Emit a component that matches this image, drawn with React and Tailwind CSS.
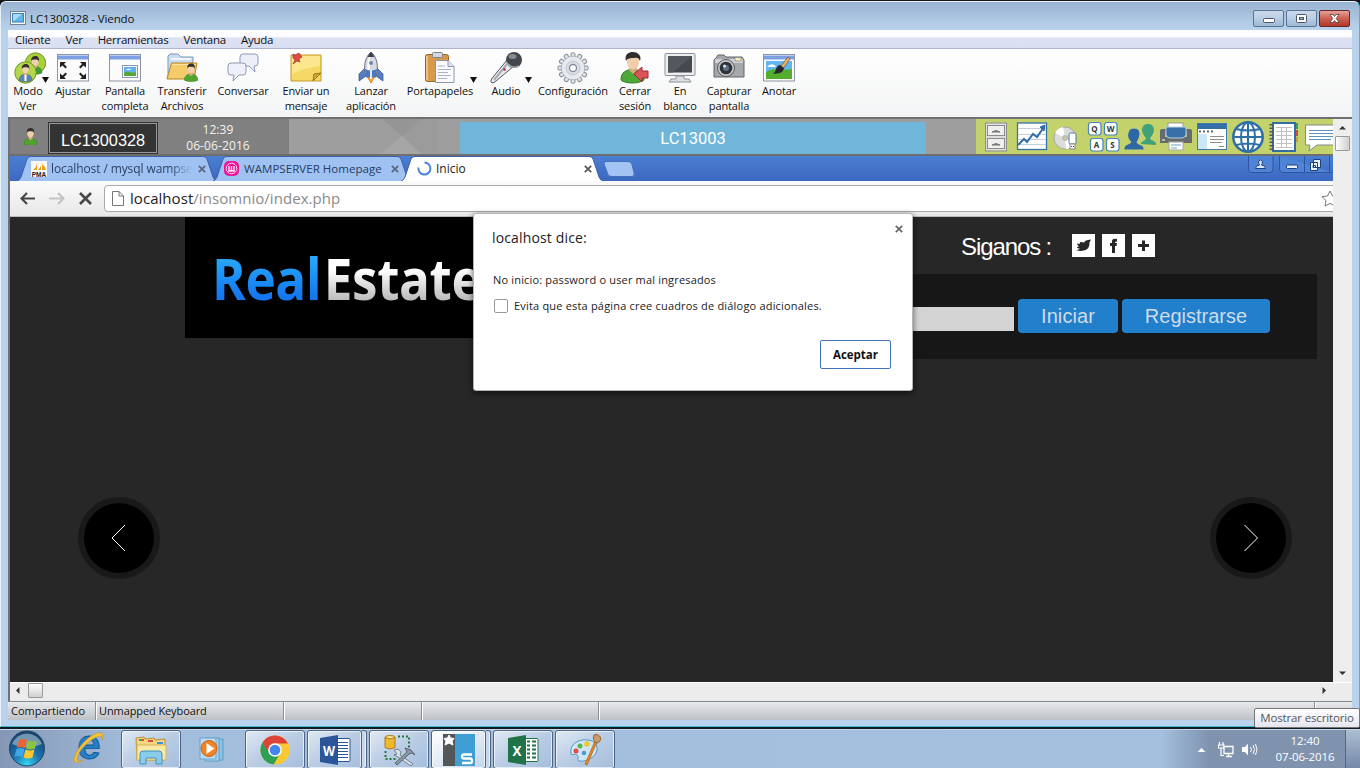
import React from "react";

const ui = "font-['Open_Sans','Noto_Sans',sans-serif]";

/* ---------- viewer toolbar icons ---------- */

function Person({ x = 0, y = 0, s = 1, body = "#4fa52f" }) {
  return (
    <g transform={`translate(${x} ${y}) scale(${s})`}>
      <path d="M1 20c0-5 3-7 8-8 5 1 8 3 8 8-3 2-13 2-16 0z" fill={body} stroke="#3c7a24" strokeWidth=".6" />
      <path d="M6.500 9h5v4l-2.500 2-2.500-2z" fill="#d9ab82" />
      <ellipse cx="9" cy="6.500" rx="4" ry="5" fill="#f0cfae" />
      <path d="M4.500 6C4 1 7 0 9.500 0 12 0 14 2 13.500 6.500 13 4 11 4 9 4 6.500 4 5.500 4 4.500 6z" fill="#33302d" />
    </g>
  );
}

const WinFrame = () => (
  <>
    <rect x=".5" y="2.500" width="31" height="26.500" fill="#fbfbfc" stroke="#8d94a6" />
    <rect x="1" y="3" width="30" height="4.500" fill="#7d9fe4" />
    <path d="M1 3.500h30" stroke="#b9cdf6" />
  </>
);

const toolIcons = {
  modo: (
    <>
      <circle cx="21.500" cy="11" r="10.200" fill="#a9cf3c" stroke="#73962a" />
      <Person x={13.5} y={4} s={0.85} body="#3f9a35" />
      <circle cx="11.500" cy="20.500" r="10.700" fill="#b4d748" stroke="#73962a" />
      <Person x={4.2} y={12} s={0.82} body="#5d83b5" />
      <path d="M11.500 23v6" stroke="#fff" strokeWidth="2" />
    </>
  ),
  ajustar: (
    <>
      <WinFrame />
      <path d="M3 10h6l-2 2 3 3-1.500 1.500-3-3L3 15.500zM29 10h-6l2 2-3 3 1.500 1.500 3-3 2.500 2zM3 27h6l-2-2 3-3-1.500-1.500-3 3L3 21.500zM29 27h-6l2-2-3-3 1.500-1.500 3 3 2.500-2z" fill="#222" />
    </>
  ),
  pantalla: (
    <>
      <WinFrame />
      <rect x="13.500" y="13.500" width="15" height="12" fill="#fff" stroke="#8b98ad" />
      <rect x="15" y="15" width="12" height="9" fill="#60b1ee" />
      <path d="M15 21c4-3 8 1 12-1v4H15z" fill="#57a733" />
      <path d="M17 18c2-2 4-1 5 0z" fill="#fff" />
    </>
  ),
  transferir: (
    <>
      <path d="M2 25V4l2-2h8l3 3h12v6L6 12z" fill="#c9dcf2" stroke="#7d97ba" />
      <path d="M5 7h20" stroke="#fff" strokeWidth="1.500" />
      <path d="M1 27L5.500 11H31l-3 16z" fill="#f5cc69" stroke="#b88425" />
      <path d="M6.500 12.500H29" stroke="#fce7a8" />
      <Person x={17.500} y={11.500} s={0.84} />
    </>
  ),
  conversar: (
    <>
      <path d="M16 2h12q3 0 3 3v6q0 3-3 3h-1l1 6-6-6h-6q-3 0-3-3V5q0-3 3-3z" fill="#eceff7" stroke="#8c98b4" />
      <path d="M4 11h12q3 0 3 3v6q0 3-3 3h-4l-6 6 1-6H4q-3 0-3-3v-6q0-3 3-3z" fill="#eef1f9" stroke="#8c98b4" />
    </>
  ),
  enviar: (
    <>
      <path d="M1 3h30v26H1z" fill="#f6d964" stroke="#c59a2c" />
      <path d="M2 4h28v10Q14 16 2 22z" fill="#fbe88e" />
      <path d="M31 21l-7 1-1 7 8-8z" fill="#d2a437" stroke="#9c7621" />
      <path d="M3 2l2 1 4-2 3 4-3 2 1 3-3-1-4 3 2-4-2-2z" fill="#dd4a45" stroke="#9c2b2b" strokeWidth=".6" />
    </>
  ),
  lanzar: (
    <>
      <path d="M12 24l4 7 4-7z" fill="#f9b22d" stroke="#ef7f1c" />
      <path d="M10 16L4 22v7l7-5zM22 16l6 6v7l-7-5z" fill="#567fc0" stroke="#2b4f8c" strokeWidth=".7" />
      <path d="M11 25C8 14 10 5 16 0c6 5 8 14 5 25z" fill="#d6dae1" stroke="#697080" />
      <path d="M13 23C12 14 12 8 15 4v19z" fill="#fff" />
      <path d="M12.500 5Q14 2 16 0q2 2 3.500 5z" fill="#3b3f47" />
      <path d="M10 17q6 3 12 0l-1 8H11z" fill="#4c77bd" />
      <path d="M16 18v9" stroke="#dfe7f5" strokeWidth="2" />
      <circle cx="16" cy="11" r="2" fill="#6e87ae" />
    </>
  ),
  porta: (
    <>
      <rect x="1.500" y="2.500" width="23" height="27" rx="2" fill="#d79a4c" stroke="#99662a" />
      <path d="M3 4v24" stroke="#eebf80" strokeWidth="2" />
      <rect x="8.500" y=".5" width="10" height="5" rx="1" fill="#d5d9de" stroke="#7d838b" />
      <path d="M11.500 8.500H24l6 6v16H11.500z" fill="#fafbfe" stroke="#8a95ad" />
      <path d="M24 8.500v6h6" fill="#dde3f0" stroke="#8a95ad" />
      <path d="M14 14h7M14 17.500h13M14 20.500h10M14 23.500h13M14 26.500h9" stroke="#aab3ca" />
    </>
  ),
  audio: (
    <>
      <path d="M17 8L1.500 27Q0 30 2 31q2 0 4-2l18-15z" fill="#e9ebee" stroke="#50545b" />
      <path d="M18 11L4 28" stroke="#a7acb4" strokeWidth="2" />
      <circle cx="14.500" cy="17.500" r="1.300" fill="#c9232e" />
      <circle cx="24" cy="8" r="8" fill="#43464a" />
      <path d="M16 10Q22 18 29 14" stroke="#aeb2b7" strokeWidth="1.500" fill="none" />
      <ellipse cx="22.500" cy="4.500" rx="4" ry="2.500" fill="#898d92" />
    </>
  ),
  config: (
    <>
      {[0, 30, 60, 90, 120, 150, 180, 210, 240, 270, 300, 330].map((a) => (
        <rect key={a} x="14" y=".8" width="4" height="6" rx="1.300" fill="#dfe2e8" stroke="#858b96" transform={`rotate(${a} 16 16)`} />
      ))}
      <circle cx="16" cy="16" r="11.700" fill="#e2e5ea" stroke="#a3a9b3" strokeWidth=".7" />
      <circle cx="16" cy="16" r="11" fill="#e7eaef" />
      <circle cx="16" cy="16" r="7" fill="#dadee4" stroke="#c2c6ce" />
      <circle cx="16" cy="16" r="3.500" fill="#fff" stroke="#858b96" strokeWidth="1.300" />
    </>
  ),
  cerrar: (
    <>
      <path d="M2 28c0-8 5-10 12-11 7 1 11 4 11 11-5 4-19 4-23 0z" fill="#4ea838" stroke="#347a25" />
      <path d="M10 14h8v4l-4 4-4-4z" fill="#d9a77f" />
      <ellipse cx="14" cy="10" rx="6" ry="7.500" fill="#f1ceab" />
      <path d="M7 9C5 2 10 0 14 0s9 3 7 9c-1-3-3-4-6-3-4 0-6 0-8 3z" fill="#2f2e2d" />
      <path d="M15 22l8-7v4h6v7h-6v4z" fill="#da5458" stroke="#9c2930" />
    </>
  ),
  blanco: (
    <>
      <rect x="1" y="1.500" width="30" height="22" rx="1" fill="#eceef1" stroke="#8d9299" />
      <rect x="4" y="4" width="24" height="16.500" fill="#45484d" />
      <path d="M4 4h24L9 20.500H4z" fill="#54585e" />
      <path d="M12 24h8v3h5l2 3H5l2-3h5z" fill="#dcdfe3" stroke="#8d9299" />
    </>
  ),
  capturar: (
    <>
      <path d="M3 6l2-3h6l2 2h16l2 3v17H1V8z" fill="#a4a7ab" stroke="#63666a" />
      <path d="M2 7h28v4H2z" fill="#d0d2d4" />
      <rect x="22" y="5.500" width="6" height="3.500" fill="#f0e9b6" stroke="#77797c" strokeWidth=".6" />
      <circle cx="13" cy="16" r="8.500" fill="#c4c6c9" stroke="#595b5f" />
      <circle cx="13" cy="16" r="6.300" fill="#2f3237" />
      <circle cx="13" cy="16" r="3" fill="#5d7188" />
      <circle cx="11.500" cy="14" r="1.500" fill="#dfe6ee" />
    </>
  ),
  anotar: (
    <>
      <WinFrame />
      <rect x="3" y="9" width="26" height="18" fill="#62b6f0" />
      <path d="M3 20c8-5 16-1 26-3v10H3z" fill="#55ad2f" />
      <path d="M4 15c4-4 7-3 9 0z" fill="#fff" />
      <path d="M25 5l-8 10 3 2 7-10z" fill="#e4b270" stroke="#724b23" strokeWidth=".7" />
      <path d="M17 13l4 3c-1 6-6 5-11 6 4-3 2-8 7-9z" fill="#26272b" />
    </>
  ),
};

const tools = [
  ["modo", "Modo", "Ver", "w-10", true],
  ["ajustar", "Ajustar", "", "w-[50px]"],
  ["pantalla", "Pantalla", "completa", "w-[54px]"],
  ["transferir", "Transferir", "Archivos", "w-[60px]"],
  ["conversar", "Conversar", "", "w-[62px]"],
  ["enviar", "Enviar un", "mensaje", "w-16"],
  ["lanzar", "Lanzar", "aplicación", "w-[66px]"],
  ["porta", "Portapapeles", "", "w-[72px]", true],
  ["audio", "Audio", "", "w-[60px]", true],
  ["config", "Configuración", "", "w-[74px]"],
  ["cerrar", "Cerrar", "sesión", "w-[50px]"],
  ["blanco", "En", "blanco", "w-10"],
  ["capturar", "Capturar", "pantalla", "w-[58px]"],
  ["anotar", "Anotar", "", "w-[42px]"],
];

const caretPos = { modo: "left-[34px]", porta: "left-[66px]", audio: "left-[49px]" };

function ViewerToolbar() {
  return (
    <div className="flex h-[69px] items-start border-t border-[#aeb4cc] bg-linear-to-b from-white to-[#f3f4f5] pt-[3px]">
      {tools.map(([id, a, b, w, menu]) => (
        <div key={id} className={`relative flex shrink-0 flex-col items-center ${w}`}>
          <svg className={`h-8 w-8 shrink-0 ${id === "modo" ? "ml-[3px]" : ""}`} viewBox="0 0 32 32">{toolIcons[id]}</svg>
          {menu && (
            <svg className={`absolute top-[25px] h-[6px] w-[7px] ${caretPos[id]}`} viewBox="0 0 7 6"><path d="M0 0h7L3.500 6z" fill="#111" /></svg>
          )}
          <div className="-mt-px text-center text-[11px] leading-[15px] tracking-[-0.12px] whitespace-nowrap text-[#111]">
            <div>{a}</div>
            <div>{b}</div>
          </div>
        </div>
      ))}
    </div>
  );
}

/* ---------- lab bar ---------- */

const labIcons = [
  <>
    <rect x="7.500" y="4" width="21" height="28" fill="#dedede" stroke="#8d8d8d" />
    <rect x="9.500" y="6.500" width="17" height="10" fill="#efefef" stroke="#8b8b8b" />
    <rect x="9.500" y="19.500" width="17" height="10" fill="#efefef" stroke="#8b8b8b" />
    <path d="M14 13q4-3 8 0zM14 26q4-3 8 0z" fill="#777" stroke="#777" />
  </>,
  <>
    <rect x="3.500" y="4" width="29" height="26.500" fill="#fff" stroke="#3872ab" strokeWidth="1.300" />
    <path d="M4 9.500h28M4 15.500h28M4 20.500h28M4 25.500h28" stroke="#c4cede" />
    <path d="M4 26l6-6 3 3 6-8 4 3 7-10" fill="none" stroke="#336da6" strokeWidth="2" />
    <path d="M26 8l5-2-1 6z" fill="#336da6" stroke="#336da6" />
  </>,
  <>
    <circle cx="15" cy="19" r="11" fill="#dcdcdc" stroke="#a6a6a6" />
    <path d="M15 19L5 14a11 11 0 0 1 8-6zM15 19l9 6a11 11 0 0 1-8 5z" fill="#fff" />
    <circle cx="15" cy="19" r="3" fill="#bcbcbc" />
    <circle cx="15" cy="19" r="1.300" fill="#c4d46e" />
    <rect x="19" y="14" width="7" height="11" rx="1.500" fill="#fff" stroke="#4a7dad" />
    <rect x="20" y="25" width="5" height="5" fill="#fff" stroke="#888" />
    <path d="M21 27.500h1M23 27.500h1" stroke="#444" />
  </>,
  <>
    {[[2.500, 3.500, "Q"], [18.500, 3.500, "W"], [4.500, 19.500, "A"], [20.500, 19.500, "S"]].map(([x, y, t]) => (
      <g key={t}>
        <rect x={x} y={y} width="12.500" height="12.500" rx="2.500" fill="#fff" stroke="#4a86b8" strokeWidth="1.200" />
        <text x={x + 6} y={y + 9} fontSize="8" fontWeight="700" textAnchor="middle" fill="#333" fontFamily="Open Sans">{t}</text>
      </g>
    ))}
  </>,
  <>
    <path d="M19 25c0-3 5-3 5-6-3-3-4-6-4-9q1-5 6-5t6 5c0 3-1 6-4 9 0 3 7 2 6 7z" fill="#41a279" />
    <path d="M2 31c-1-6 7-6 7-8-3-3-4-6-3-9q1-5 6-5t6 5c0 3-1 6-3 9 0 3 8 2 7 8z" fill="#2d67a5" stroke="#c4d46e" />
  </>,
  <>
    <rect x="10" y="4" width="15" height="6" fill="#fff" stroke="#999" />
    <path d="M4 10h4l-1 8h22l-1-8h4q2 0 2 2v12H2V12q0-2 2-2z" fill="#666a6c" />
    <path d="M8 8h20v8q-1 3-4 3H12q-3 0-4-3z" fill="#366fa8" stroke="#b9d1e7" />
    <rect x="11" y="23" width="14" height="8" fill="#fff" stroke="#aaa" />
    <path d="M13 26h10M13 29h6" stroke="#72a1c9" />
    <path d="M4 21h3" stroke="#fff" />
  </>,
  <>
    <rect x="3.500" y="4.500" width="29" height="26" fill="#fff" stroke="#4179ad" />
    <rect x="4" y="5" width="28" height="5" fill="#356fa7" />
    <path d="M5 12.500h15" stroke="#666" strokeWidth="2" strokeDasharray="2 2" />
    <rect x="4" y="15" width="9" height="15" fill="#cde6f6" />
    <path d="M16 17.500h14M16 20.500h14M16 23.500h12M25 27.500h5" stroke="#8d8d8d" />
  </>,
  <>
    <circle cx="18" cy="18" r="14.700" fill="#fff" stroke="#2f6fa7" strokeWidth="2.500" />
    <ellipse cx="18" cy="18" rx="7" ry="14.500" fill="none" stroke="#2f6fa7" strokeWidth="2" />
    <path d="M18 3v30M3 18h30M6 10q12 3 24 0M6 26q12-3 24 0" fill="none" stroke="#2f6fa7" strokeWidth="2" />
  </>,
  <>
    <path d="M29 4h3v6h-3z" fill="#3d9b62" /><path d="M29 11h3v6h-3z" fill="#bf5330" /><path d="M29 18h3v5h-3z" fill="#d69a2b" />
    <rect x="7" y="4" width="22" height="28" fill="#fff" stroke="#336da5" strokeWidth="2" />
    <path d="M10 8.500h16M10 12.500h16M10 16.500h16M10 20.500h16M10 24.500h16M10 28.500h16M15.500 8v20M20.500 8v20" stroke="#c1c1c1" />
    <path d="M5.500 5v27" stroke="#555" strokeWidth="4" strokeDasharray="1.500 2" />
  </>,
  <>
    <path d="M3.500 6h34v20H15l-8 6 1-6H3.500z" fill="#fff" stroke="#7f8d86" />
    <path d="M7 11.500h30M7 14.500h30M7 17.500h30M7 20.500h22" stroke="#5b92c1" />
  </>,
];

function LabBar() {
  return (
    <div className="flex h-[37px] overflow-hidden border-b-2 border-[#6e6e6e] bg-[#9e9e9e]">
      <div className="flex w-[279px] shrink-0 bg-[#808080]">
        <div className="flex w-[38px] items-center justify-center">
          <svg className="ml-0.5 h-[17px] w-[15px]" viewBox="0 0 18 21"><Person /></svg>
        </div>
        <div className="mt-[3px] flex w-[110px] items-center justify-center border-2 border-b-0 border-[#333] bg-[#333] pt-[2px] font-['Liberation_Sans',Arial,sans-serif] text-[16.300px] text-white outline-1 -outline-offset-2 outline-[#999]">LC1300328</div>
        <div className="w-[120px] pt-[3px] text-center text-[12px] leading-4 tracking-[0.1px] text-[#f2f2f2]">
          <div>12:39</div>
          <div>06-06-2016</div>
        </div>
      </div>
      <svg className="h-[35px] w-[171px] shrink-0" viewBox="0 0 171 35">
        <path d="M93 0h40l-20 17z" fill="#959595" />
        <path d="M113 17l20-17h16v35h-18z" fill="#9b9b9b" />
        <path d="M113 17L92 35h40z" fill="#a6a6a6" />
      </svg>
      <div className="mt-[3px] flex w-[466px] shrink-0 items-center justify-center bg-[#70b6da] pt-[3px] font-[Roboto,sans-serif] text-[16.500px] text-white">LC13003</div>
      <div className="w-[50px] shrink-0" />
      <div className="flex w-[357px] shrink-0 overflow-hidden bg-[#c3d26b] pl-0.5">
        {labIcons.map((icon, i) => (
          <svg key={i} className="h-9 w-9 shrink-0" viewBox="0 0 36 36">{icon}</svg>
        ))}
      </div>
    </div>
  );
}

/* ---------- inner browser ---------- */

function CloseX({ className = "", color = "#5b6678" }) {
  return (
    <svg className={`h-2 w-2 shrink-0 ${className}`} viewBox="0 0 8 8"><path d="M.8.8l6.400 6.400M7.200.8L.8 7.200" stroke={color} strokeWidth="1.700" /></svg>
  );
}

function Tab({ width, fill, children, className = "" }) {
  return (
    <div className={`relative h-[25px] shrink-0 ${className}`}>
      <svg className="absolute inset-0 h-full w-full" viewBox={`0 0 ${width} 25`} preserveAspectRatio="none">
        <path d={`M0 25Q3 24 4 21L10 3Q11 .5 14 .5H${width - 14}Q${width - 11} .5 ${width - 10} 3L${width - 4} 21Q${width - 3} 24 ${width} 25`} fill={fill} stroke="#3c62a6" strokeWidth="1" />
      </svg>
      <div className="relative flex h-full items-center text-[12px]">{children}</div>
    </div>
  );
}

function Tabs() {
  return (
    <div className="flex h-[25px] overflow-hidden bg-linear-to-b from-[#4b7fd4] to-[#3c68bf] pl-[7px]">
      <Tab width={200} fill="#9fc2f2" className="w-[200px]">
        <svg className="mt-px ml-[14px] h-4 w-4 shrink-0" viewBox="0 0 16 16">
          <rect width="16" height="16" fill="#f7f7f5" />
          <path d="M2 9Q6 6 6 1v8zM7 9q4-3 3-9v9zM11 9V3q3 2 4 6z" fill="#eba11d" />
          <text x="8" y="15.500" fontSize="6.500" fontWeight="700" textAnchor="middle" fill="#222" fontFamily="Liberation Sans">PMA</text>
        </svg>
        <div className="ml-1 w-[141px] bg-linear-to-r from-[#273c5e] from-85% to-[#273c5e00] bg-clip-text tracking-[-0.1px] whitespace-nowrap text-transparent">localhost / mysql wampser</div>
        <CloseX className="ml-1.5" />
      </Tab>
      <Tab width={198} fill="#9fc2f2" className="-ml-1 w-[198px]">
        <svg className="ml-[11px] h-[15px] w-[15px] shrink-0" viewBox="0 0 15 15">
          <rect width="15" height="15" rx="5" fill="#f0149a" />
          <circle cx="7.500" cy="7.500" r="5.300" fill="none" stroke="#ffd9ef" />
          <path d="M5 5v5h5V5M7.500 5v5" fill="none" stroke="#fff" strokeWidth="1.300" />
        </svg>
        <div className="ml-[5px] w-[142px] text-[11.500px] tracking-[0.05px] whitespace-nowrap text-[#273c5e]">WAMPSERVER Homepage</div>
        <CloseX className="ml-[5px]" />
      </Tab>
      <Tab width={202} fill="#ffffff" className="-ml-[10px] w-[202px]">
        <svg className="ml-4 h-[15px] w-[15px] shrink-0" viewBox="0 0 15 15"><path d="M7.500 1.500a6 6 0 1 1-6 5" fill="none" stroke="#4b84e0" strokeWidth="2" /></svg>
        <div className="ml-1 w-[146px] text-[#222]">Inicio</div>
        <CloseX className="ml-[2px]" color="#555" />
      </Tab>
      <svg className="mt-[5px] h-[17px] w-8 shrink-0" viewBox="0 0 32 17"><path d="M3 .5h22q3 0 4 3l2 8q1 4-2 4H9q-3 0-4-2L1 3Q1 .5 3 .5z" fill="#a3c3f3" stroke="#4470bb" /></svg>
      <div className="grow" />
      <svg className="h-[18px] w-[85px] shrink-0" viewBox="0 0 85 18">
        <path d="M.5 0v13q0 3.500 3.500 3.500h18q3 0 3-3.500V0M31.500 0v13q0 3.500 3.500 3.500h50" fill="#4f83d5" stroke="#2b55a0" />
        <path d="M56.500 0v16M81.500 0v16" stroke="#2b55a0" />
        <path d="M10.500 5.500q2-3 4 0 0 2-1 3.500 4 .5 4 3.500h-10q0-3 4-3.500-1-1.500-1-3.500z" fill="#dbe8fa" stroke="#203e78" />
        <rect x="38.500" y="9" width="11" height="3.500" rx="1" fill="#e9f1fc" stroke="#203e78" />
        <path d="M65.500 3.500h7v8h-7zM62.500 6.500h7v8h-7zM65 9.500h2.500v2H65z" fill="#e9f1fc" stroke="#203e78" />
      </svg>
    </div>
  );
}

function AddressBar() {
  return (
    <div className="flex h-9 items-start overflow-hidden border-b border-[#bbb] bg-linear-to-b from-[#fbfbfb] to-[#e7e7e7] pt-1">
      <svg className="mt-[7px] ml-2.5 h-[14px] w-[80px] shrink-0" viewBox="0 0 80 14">
        <path d="M7 1L1.500 6.500 7 12M2 6.500h13" fill="none" stroke="#474747" strokeWidth="2.200" />
        <path d="M38 1l5.500 5.500L38 12M43 6.500H29" fill="none" stroke="#c4c4c4" strokeWidth="2.200" />
        <path d="M60 1l11 11M71 1L60 12" fill="none" stroke="#474747" strokeWidth="2.600" />
      </svg>
      <div className="ml-1 flex h-[27px] w-[1240px] shrink-0 items-center rounded border border-[#aaa] bg-white pl-[7px]">
        <svg className="h-[15px] w-3" viewBox="0 0 12 15"><path d="M.5.5H7L11.500 5v9.500H.5zM7 .5V5h4.500" fill="#fff" stroke="#777" /></svg>
        <div className="ml-1.5 text-[15px] tracking-[0.05px] text-[#8a8a8a]"><span className="text-[#1c1c1c]">localhost</span>/insomnio/index.php</div>
        <svg className="ml-[981px] h-[18px] w-[18px] shrink-0" viewBox="0 0 18 18"><path d="M9 1l2.500 5 5.500.7-4 3.800 1 5.500-5-2.600L4 16l1-5.500L1 6.700 6.500 6z" fill="#fff" stroke="#777" /></svg>
      </div>
    </div>
  );
}

function RoundArrow({ d }) {
  return (
    <svg className="h-[82px] w-[82px]" viewBox="0 0 82 82">
      <circle cx="41" cy="41" r="41" fill="#191919" />
      <circle cx="41" cy="41" r="35" fill="#000" />
      <path d={d} fill="none" stroke="#fff" strokeWidth="1" />
    </svg>
  );
}

const social = [
  <path d="M4 16q3 0 4-1.500-3 0-3-1.500l2-.5Q5 11 5 9.500l3 .5Q7 8 9 8l3 .5Q13 6 16 6l3-.5-1.500 3Q18 15 12 16.500q-4 1-8-.5z" fill="#272727" />,
  <path d="M10 19v-7H8V9h2q-1-5 5-4v2.500q-2-.5-2 1.500h2l-.5 3H13v7z" fill="#272727" />,
  <path d="M10 6.500h3V10h4v3h-4v4h-3v-4H6v-3h4z" fill="#272727" />,
];

function WebPage() {
  return (
    <div className="h-[465px] overflow-hidden bg-[#272727] font-['Liberation_Sans',Arial,sans-serif]">
      <div className="flex h-[142px] pl-[175px]">
        <div className="h-[121px] w-[300px] shrink-0 bg-black pt-[22px] pl-[27px] font-['Open_Sans',sans-serif]">
          <div className="flex origin-left scale-x-[0.885] gap-[3px] text-[58px] leading-[78px] font-bold tracking-[-0.5px]">
            <span className="bg-linear-to-b from-[#29a7f8] from-25% to-[#1476f0] to-75% bg-clip-text text-transparent">Real</span>
            <span className="bg-linear-to-b from-white from-40% to-[#b9b9b9] to-80% bg-clip-text text-transparent">Estate</span>
          </div>
        </div>
        <div className="w-[832px] shrink-0">
          <div className="flex h-[57px] pt-[17px] pl-[476px] text-white">
            <div className="-mt-px w-[111px] text-[24px] leading-[27px] tracking-[-1.1px] whitespace-nowrap">Siganos :</div>
            <div className="flex gap-[7px]">
              {social.map((s, i) => (
                <svg key={i} className="h-[23px] w-[23px] bg-white" viewBox="0 0 23 23">{s}</svg>
              ))}
            </div>
          </div>
          <div className="flex h-[85px] items-start gap-1 bg-[#171717] pt-[25px] pl-[329px]">
            <div className="mt-2 h-6 w-[200px] bg-[#d4d4d4]" />
            <div className="flex h-[34px] w-[100px] items-center justify-center rounded-[4px] bg-[#217fcc] text-[20px] tracking-[0.1px] text-[#cfdbe7]">Iniciar</div>
            <div className="flex h-[34px] w-[148px] items-center justify-center rounded-[4px] bg-[#217fcc] text-[20px] text-[#cfdbe7]">Registrarse</div>
          </div>
        </div>
      </div>
      <div className="mt-[138px] flex justify-between pr-[41px] pl-[68px]">
        <RoundArrow d="M47 28L34 41l13 13" />
        <RoundArrow d="M34.500 28l13 13-13 13" />
      </div>
    </div>
  );
}

function Dialog() {
  return (
    <div className="absolute top-[94px] left-[463px] h-[178px] w-[440px] rounded-[3px] border border-[#b5b5b5] bg-white shadow-[0_2px_6px_rgba(0,0,0,0.6)]">
      <div className="flex items-start justify-between pt-[12px] pr-[9px] pl-[18px]">
        <div className="text-[14px] leading-[24px] tracking-[0.15px] text-[#222]">localhost dice:</div>
        <CloseX className="-mt-px" color="#666" />
      </div>
      <div className="mt-[22px] pl-[19px] text-[11px] leading-4 tracking-[0.17px] text-[#222]">No inicio: password o user mal ingresados</div>
      <div className="mt-[9px] flex items-center pl-5 text-[11px] leading-[17px] tracking-[0.19px] text-[#222]">
        <span className="mr-1.5 h-[14px] w-[14px] rounded-[2px] border border-[#9a9a9a]" />
        <span>Evita que esta página cree cuadros de diálogo adicionales.</span>
      </div>
      <div className="mt-[26px] ml-[346px] flex h-[29px] w-[71px] items-center justify-center rounded-[2px] border border-[#4072bd] text-[11.500px] font-bold text-[#111]">Aceptar</div>
    </div>
  );
}

/* ---------- desktop taskbar ---------- */

function TaskButton({ className, active, stacked, children }) {
  return (
    <div className={`flex h-[39px] shrink-0 ${className}`}>
      <div className={`flex grow items-center justify-center rounded-[3px] border border-[#4d6484] shadow-[inset_0_0_0_1px_rgba(255,255,255,0.65)] ${active ? "bg-linear-to-br from-white to-[#c3d4e9]" : "bg-linear-to-br from-[#e0e9f4] via-[#b9cce4] to-[#a6bedd]"}`}>
        <svg className="h-8 w-8 shrink-0" viewBox="0 0 32 32">{children}</svg>
      </div>
      {stacked && <div className="w-[5px] shrink-0 rounded-r-[3px] border border-l-0 border-[#4d6484] bg-[#c8d7ea] shadow-[inset_-1px_0_0_rgba(255,255,255,0.6)]" />}
    </div>
  );
}

function OfficeIcon({ color, dark, letter, sheet }) {
  return (
    <>
      <rect x="16" y="4.500" width="15" height="23" rx="1" fill="#fff" stroke={color} />
      <path d={sheet ? "M20 7.500h3M25 7.500h4M20 11.500h3M25 11.500h4M20 15.500h3M25 15.500h4M20 19.500h3M25 19.500h4M20 23.500h3M25 23.500h4" : "M18 8.500h11M18 11.500h11M18 14.500h11M18 17.500h11M18 20.500h11M18 23.500h11"} stroke={color} strokeWidth={sheet ? 2 : 1} />
      <path d="M1 4L19 1v30L1 28z" fill={dark} />
      <text x="10" y="21.500" fontSize="15" fontWeight="700" textAnchor="middle" fill="#fff" fontFamily="Open Sans" textLength={sheet ? 9 : 12} lengthAdjust="spacingAndGlyphs">{letter}</text>
    </>
  );
}

function Taskbar() {
  return (
    <div className="flex h-[40px] items-start border-t border-[#c4d8ee] bg-linear-to-r from-[#8497b4] via-[#a3bedd] via-10% to-[#a5c0df]">
      <svg className="ml-2 h-[39px] w-[38px] shrink-0" viewBox="0 0 38 39">
        <defs>
          <radialGradient id="orb" cx=".5" cy=".95" r=".9"><stop offset="0" stopColor="#35d5f6" /><stop offset=".45" stopColor="#1972ac" /><stop offset="1" stopColor="#16436e" /></radialGradient>
        </defs>
        <circle cx="19" cy="18.500" r="17.500" fill="url(#orb)" stroke="#244466" />
        <path d="M4 14a16 16 0 0 1 30 0q-15 7-30 0z" fill="#fff" opacity=".4" />
        <path d="M11 10q4-2 8 0l-2 8q-4-2-8 0z" fill="#ee6332" />
        <path d="M20 10.500q4 2 9 0l-2 8q-5 2-9 0z" fill="#8bc53f" />
        <path d="M8.500 19q4-2 8 0l-2 8q-4-2-8 0z" fill="#43a5e5" />
        <path d="M17.500 19.500q4 2 9 0l-2 8q-5 2-9 0z" fill="#fdc733" />
      </svg>
      <div className="flex w-[75px] justify-center pl-2">
        <svg className="mt-[2px] h-8 w-8 overflow-visible" viewBox="0 0 32 32">
          <text x="17" y="27" fontSize="42" fontWeight="700" textAnchor="middle" fill="#247fc4" stroke="#115895" strokeWidth=".8" fontFamily="Liberation Sans">e</text>
          <path d="M3 30C-1 26 11 7 23 2c6-3 10 0 7 6 1-4-1-5-5-3C15 9 5 21 5 27q0 4 6 1-5 4-8 2z" fill="#f5c33a" stroke="#c99222" strokeWidth=".6" />
        </svg>
      </div>
      <TaskButton className="w-[60px]">
        <path d="M1 4l8-1 1 2 9-1 1 2 10-1v21H2z" fill="#f2d77e" stroke="#b88e35" />
        <path d="M4 5h5v2H4zM13 6h5v2h-5z" fill="#df4635" /><path d="M22 8h6v2h-6z" fill="#3a92dc" /><path d="M4 5h3v2H4z" fill="#38a64d" />
        <path d="M2 11h29v15H2z" fill="#f9e9a7" stroke="#d5b55a" />
        <path d="M5 30V20q0-3 3-3h16q3 0 3 3v10h-6v-6H11v6z" fill="#89cbed" stroke="#4193be" />
      </TaskButton>
      <div className="flex w-[64px] justify-center">
        <svg className="mt-[4px] h-8 w-8" viewBox="0 0 32 32">
          <path d="M14 5h12v21H14z" fill="#8bc2e6" stroke="#5c9cc6" />
          <path d="M8 4h14v23H8z" fill="#a8d3ef" stroke="#5c9cc6" />
          <path d="M3 4h16v21H3z" fill="#b9ddf4" stroke="#6ba3ca" />
          <circle cx="12" cy="14.500" r="8" fill="#f18424" stroke="#d4620f" />
          <path d="M9.500 9l8 5.500-8 5.500z" fill="#fff" />
        </svg>
      </div>
      <TaskButton className="w-[60px]">
        <circle cx="16" cy="16" r="14.500" fill="#fac832" />
        <path d="M3.500 8.500A14.500 14.500 0 0 0 15 30.500l6-11-10-1z" fill="#2f9f53" />
        <path d="M15 30.500L21.500 19 16 9h12.800A14.500 14.500 0 0 1 15 30.500z" fill="#fac832" />
        <path d="M16 9.500H28.900A14.500 14.500 0 0 0 3.500 8.500l6 10q0-9 6.500-9z" fill="#db4437" />
        <circle cx="16" cy="16" r="6.800" fill="#fff" /><circle cx="16" cy="16" r="5.300" fill="#4384ee" />
      </TaskButton>
      <TaskButton className="ml-[2px] w-[60px]" stacked><OfficeIcon color="#2a5699" dark="#2a5699" letter="W" /></TaskButton>
      <TaskButton className="ml-[2px] w-[60px]">
        <ellipse cx="7" cy="3.500" rx="5" ry="2" fill="#fce693" stroke="#ac7c18" /><path d="M2 3.500v10q5 3 10 0v-10q-5 3-10 0z" fill="#efb82e" stroke="#ac7c18" />
        <path d="M15 2.500h11v11M2.500 17v8h11" fill="none" stroke="#28743b" strokeWidth="2" strokeDasharray="2 2" />
        <path d="M11 16l4-1 3 3-1 3 13 9-2 2-13-9-4-2 3-1z" fill="#d8e1ea" stroke="#5e6c7b" strokeWidth=".8" />
        <path d="M22 14l6 2 4 5-3-2-3 1-12 11-2-2 12-11z" fill="#8b98a6" stroke="#48525c" strokeWidth=".8" />
      </TaskButton>
      <TaskButton className="ml-[2px] w-[60px]" active stacked>
        <path d="M0 0h12v32H0z" fill="#53575a" /><path d="M12 0h20v32H12z" fill="#3f9fd5" />
        <path d="M6 1l1.500 3 3.500.5-2 2.500 1 4-4-2-4 2 1-4-2-2.500L4.500 4z" fill="#fff" stroke="#fff" strokeLinejoin="round" />
        <path d="M29 20.500h-8q-2 0-2 2t2 2h6q2 0 2 2.500t-2 2h-8" fill="none" stroke="#fff" strokeWidth="2.300" />
      </TaskButton>
      <TaskButton className="ml-[2px] w-[60px]"><OfficeIcon color="#207346" dark="#207346" letter="X" sheet /></TaskButton>
      <TaskButton className="ml-[2px] w-[60px]">
        <path d="M2 20C0 10 10 5 18 6c9 0 12 8 9 13-3 6-12 9-17 8-3-1 1-4-2-6-2-2-5 1-6-1z" fill="#cfe6f5" stroke="#5695bd" />
        <circle cx="7" cy="17" r="2.500" fill="#e4483f" /><circle cx="11" cy="12" r="2.500" fill="#58b648" /><circle cx="18" cy="10" r="2.800" fill="#f3c534" /><circle cx="15" cy="19" r="2.300" fill="#4c9bd0" />
        <path d="M26 7l2 1-10 23-2-1z" fill="#e58a2c" stroke="#ad5c15" strokeWidth=".7" /><path d="M25 1q4-2 7 3-1 5-5 5-4-3-2-8z" fill="#c89b6a" stroke="#8d6437" />
      </TaskButton>
      <div className="grow" />
      <div className="flex h-[39px] w-[200px] shrink-0 items-center bg-linear-to-r from-[#a5c0df] to-[#7f93af] to-25%">
        <svg className="ml-9 h-4 w-[68px]" viewBox="0 0 68 16">
          <path d="M1.500 10h8l-4-4z" fill="#fff" />
          <path d="M28 4.500h9v7h-9zM30 14.500h6M32.500 12v2" fill="none" stroke="#fff" strokeWidth="1.300" />
          <path d="M23.500 0v3M27 0v3M22.500 3h5.500v3h-5.500zM25 6v7.500h3" fill="none" stroke="#fff" strokeWidth="1.200" />
          <path d="M46 5h3l3-3.500v12L49 10h-3z" fill="#fff" /><path d="M54.500 5q2 2.500 0 5M57 3q3 4.500 0 9M59.500 2q3 5.500 0 11" fill="none" stroke="#fff" />
        </svg>
        <div className="-mt-0.5 ml-px w-20 text-center text-[11.500px] leading-4 tracking-[-0.1px] text-white">
          <div>12:40</div>
          <div>07-06-2016</div>
        </div>
        <div className="h-full w-[15px] border-l border-[#56677f] bg-linear-to-b from-[#aebed3] to-[#7288a7]" />
      </div>
    </div>
  );
}

/* ---------- window ---------- */

function TitleBar() {
  return (
    <div className="flex h-7 items-start pl-[2px]">
      <svg className="mt-[9px] h-[15px] w-4" viewBox="0 0 16 15"><rect x=".5" y=".5" width="15" height="13" fill="#f3f6fa" stroke="#7a828f" /><rect x="2.500" y="2.500" width="11" height="8.500" fill="#61b4ea" stroke="#3a80ba" /><path d="M3 3h9L4 10H3z" fill="#a5dbf8" /></svg>
      <div className="mt-[9px] ml-1 text-[11.500px] leading-4 tracking-[-0.1px] text-[#111]">LC1300328 - Viendo</div>
      <div className="grow" />
      <div className="mt-2 mr-[2px] flex gap-[2px]">
        <div className="flex h-[17px] w-[31px] items-center justify-center rounded-[2px] border border-[#5b7494] bg-linear-to-b from-[#cbd9ea] via-[#bccfe5] via-45% to-[#9db8d5]">
          <svg className="mt-1 h-[5px] w-[12px]" viewBox="0 0 12 5"><rect x=".5" y=".5" width="11" height="4" rx="1" fill="#fff" stroke="#4a576b" /></svg>
        </div>
        <div className="flex h-[17px] w-[31px] items-center justify-center rounded-[2px] border border-[#5b7494] bg-linear-to-b from-[#cbd9ea] via-[#bccfe5] via-45% to-[#9db8d5]">
          <svg className="h-[9px] w-[11px]" viewBox="0 0 11 9"><rect x=".5" y=".5" width="10" height="8" rx="1" fill="#fff" stroke="#4a576b" /><rect x="3.500" y="3.500" width="4" height="2" fill="#9bb4d1" stroke="#4a576b" /></svg>
        </div>
        <div className="flex h-[17px] w-[31px] items-center justify-center rounded-[2px] border border-[#6b2726] bg-linear-to-b from-[#e5a39a] via-[#cf6557] via-45% to-[#b13826]">
          <svg className="h-[9px] w-[11px]" viewBox="0 0 11 9"><path d="M1 .5h3l1.500 2L7 .5h3L7.200 4.500 10 8.500H7l-1.500-2-1.500 2H1l2.800-4z" fill="#fff" stroke="#554044" strokeWidth=".8" /></svg>
        </div>
      </div>
    </div>
  );
}

function ScrollArrow({ d }) {
  return <svg className="h-[7px] w-[7px] shrink-0" viewBox="0 0 7 7"><path d={d} fill="#333" /></svg>;
}

export default function App() {
  return (
    <div className={`relative h-[768px] w-[1360px] overflow-hidden bg-[#15191f] ${ui}`}>
      <div className="h-[729px] pt-px">
        <div className="h-[726px] rounded-t-[6px] border border-t-[#e7f3fc] border-r-[#30c0dc] border-b-[#39bfd2] border-l-[#e8f3fb] bg-linear-to-b from-[#99b3d1] to-[#bad2ec] to-[28px] px-[7px]">
          <TitleBar />
          <div className="flex h-[18px] items-center gap-[15px] bg-linear-to-b from-[#fdfdff] from-35% via-[#dde2f2] via-45% to-[#d9e0f2] pt-[2px] pl-[7px] text-[11.500px] tracking-[-0.25px] text-[#111]">
            <span>Cliente</span>
            <span>Ver</span>
            <span>Herramientas</span>
            <span>Ventana</span>
            <span>Ayuda</span>
          </div>
          <ViewerToolbar />
          <div className="h-[584px] border-t-2 border-l-2 border-[#707070]">
            <div className="flex h-[563px]">
              <div className="relative w-[1323px] shrink-0">
                <LabBar />
                <Tabs />
                <AddressBar />
                <WebPage />
                <Dialog />
              </div>
              <div className="flex grow flex-col items-center bg-[#eeeeee] pt-[5px] pb-[5px]">
                <ScrollArrow d="M0 5.500L3.500 2 7 5.500z" />
                <div className="mt-[5px] h-[15px] w-[15px] rounded-[1px] border border-[#9a9a9a] bg-linear-to-r from-white to-[#cfcfcf]" />
                <div className="grow" />
                <ScrollArrow d="M0 1.500L3.500 5 7 1.500z" />
              </div>
            </div>
            <div className="flex h-[19px] items-center border-t border-white bg-[#ececec] pb-[3px] pl-[4px]">
              <ScrollArrow d="M5.500 0L2 3.500 5.500 7z" />
              <div className="ml-[7px] h-[15px] w-[15px] rounded-[1px] border border-[#9a9a9a] bg-linear-to-b from-white to-[#cfcfcf]" />
              <div className="grow" />
              <div className="mr-[24px]"><ScrollArrow d="M1.500 0L5 3.500 1.500 7z" /></div>
            </div>
          </div>
          <div className="flex h-[19px] items-stretch border-t border-[#84898f] bg-linear-to-b from-[#e8eaec] to-[#bdc1c6] text-[11px] leading-[18px] text-[#111]">
            <div className="w-[88px] border-r border-[#8c9096] pl-[3px]">Compartiendo</div>
            <div className="w-[188px] border-r border-l border-r-[#8c9096] border-l-white pl-[2px] tracking-[-0.1px]">Unmapped Keyboard</div>
            <div className="w-[138px] border-r border-l border-r-[#8c9096] border-l-white" />
            <div className="w-[177px] border-r border-l border-r-[#8c9096] border-l-white" />
            <div className="w-[716px] border-r border-l border-r-[#8c9096] border-l-white" />
            <div className="grow border-l border-white" />
          </div>
        </div>
      </div>
      <Taskbar />
      <div className="absolute top-[708px] left-[1254px] flex h-5 w-[106px] items-center justify-center rounded-[2px] border border-[#767676] bg-linear-to-b from-white to-[#e5e5f0] text-[11.500px] tracking-[-0.15px] whitespace-nowrap text-[#575757]">Mostrar escritorio</div>
    </div>
  );
}
